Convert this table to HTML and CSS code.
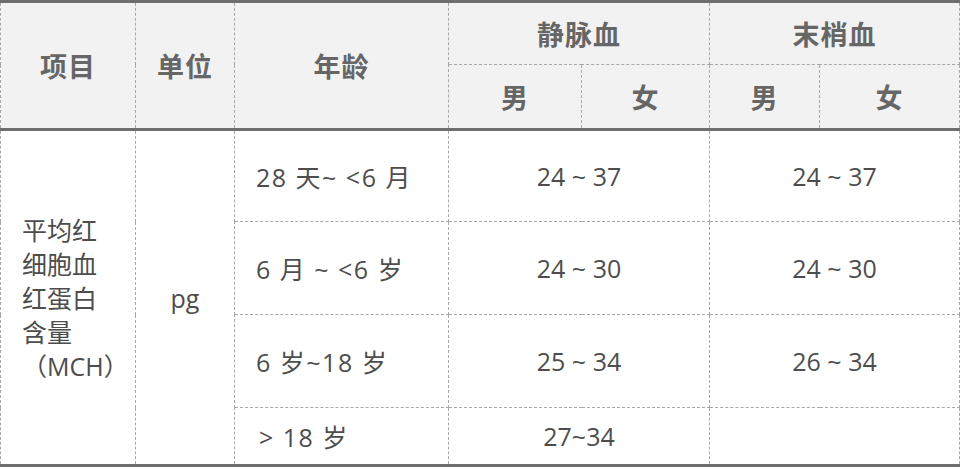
FILE: index.html
```html
<!DOCTYPE html>
<html lang="zh-CN">
<head>
<meta charset="utf-8">
<title>MCH</title>
<link rel="stylesheet" href="styles.css">
</head>
<body>
<table class="ref">
  <colgroup>
    <col class="c-item"><col class="c-unit"><col class="c-age">
    <col class="c-vm"><col class="c-vf"><col class="c-pm"><col class="c-pf">
  </colgroup>
  <thead>
    <tr class="h1">
      <th rowspan="2">项目</th>
      <th rowspan="2">单位</th>
      <th rowspan="2">年龄</th>
      <th colspan="2">静脉血</th>
      <th colspan="2">末梢血</th>
    </tr>
    <tr class="h2">
      <th>男</th><th>女</th><th>男</th><th>女</th>
    </tr>
  </thead>
  <tbody>
    <tr class="r1">
      <td rowspan="4" class="item">平均红细胞血红蛋白含量<span class="abbr">（MCH）</span></td>
      <td rowspan="4" class="unit">pg</td>
      <td class="age">28 天~ &lt;6 月</td>
      <td colspan="2" class="val">24 ~ 37</td>
      <td colspan="2" class="val">24 ~ 37</td>
    </tr>
    <tr class="r2">
      <td class="age">6 月 ~ &lt;6 岁</td>
      <td colspan="2" class="val">24 ~ 30</td>
      <td colspan="2" class="val">24 ~ 30</td>
    </tr>
    <tr class="r3">
      <td class="age">6 岁~18 岁</td>
      <td colspan="2" class="val">25 ~ 34</td>
      <td colspan="2" class="val">26 ~ 34</td>
    </tr>
    <tr class="r4">
      <td class="age age-gt">&gt; 18 岁</td>
      <td colspan="2" class="val">27~34</td>
      <td colspan="2" class="val"></td>
    </tr>
  </tbody>
</table>
</body>
</html>
```
FILE: styles.css
```css
html, body {
  margin: 0;
  padding: 0;
  background: #ffffff;
}
.ref {
  border-collapse: collapse;
  table-layout: fixed;
  width: 959px;
  font-family: "Open Sans", "Noto Sans CJK SC", sans-serif;
  font-size: 25px;
  color: #4d4d4d;
}
.c-item { width: 135px; }
.c-unit { width: 99px; }
.c-age { width: 214px; }
.c-vm { width: 133px; }
.c-vf { width: 128px; }
.c-pm { width: 110px; }
.c-pf { width: 140px; }

.ref th, .ref td {
  border: 1px dashed #a8a8a8;
  padding: 0;
}
.ref thead th {
  background: #f2f2f2;
  color: #666666;
  font-weight: bold;
  font-family: "Noto Sans CJK SC", sans-serif;
  font-size: 27px;
  letter-spacing: 1px;
  text-align: center;
  vertical-align: middle;
}
.ref thead tr.h1 th { border-top: 3px solid #6e6e6e; }
.ref thead tr.h2 th,
.ref thead tr.h1 th[rowspan] { border-bottom: 3px solid #6e6e6e; }
.ref tbody tr.r4 td,
.ref tbody td[rowspan] { border-bottom: 3px solid #6e6e6e; }

.h1 { height: 63px; }
.h2 { height: 65px; }
.r1 { height: 92px; }
.r2 { height: 93px; }
.r3 { height: 93px; }
.r4 { height: 58px; }

.item {
  text-align: left;
  padding: 0 14px 0 21px !important;
  line-height: 34px;
  vertical-align: middle;
}
.abbr { white-space: nowrap; }
.unit { text-align: center; vertical-align: middle; }
.age {
  text-align: left;
  padding-left: 21px !important;
  letter-spacing: 1.5px;
  vertical-align: middle;
}
.age-gt { padding-left: 24px !important; }
.val { text-align: center; vertical-align: middle; }
```
